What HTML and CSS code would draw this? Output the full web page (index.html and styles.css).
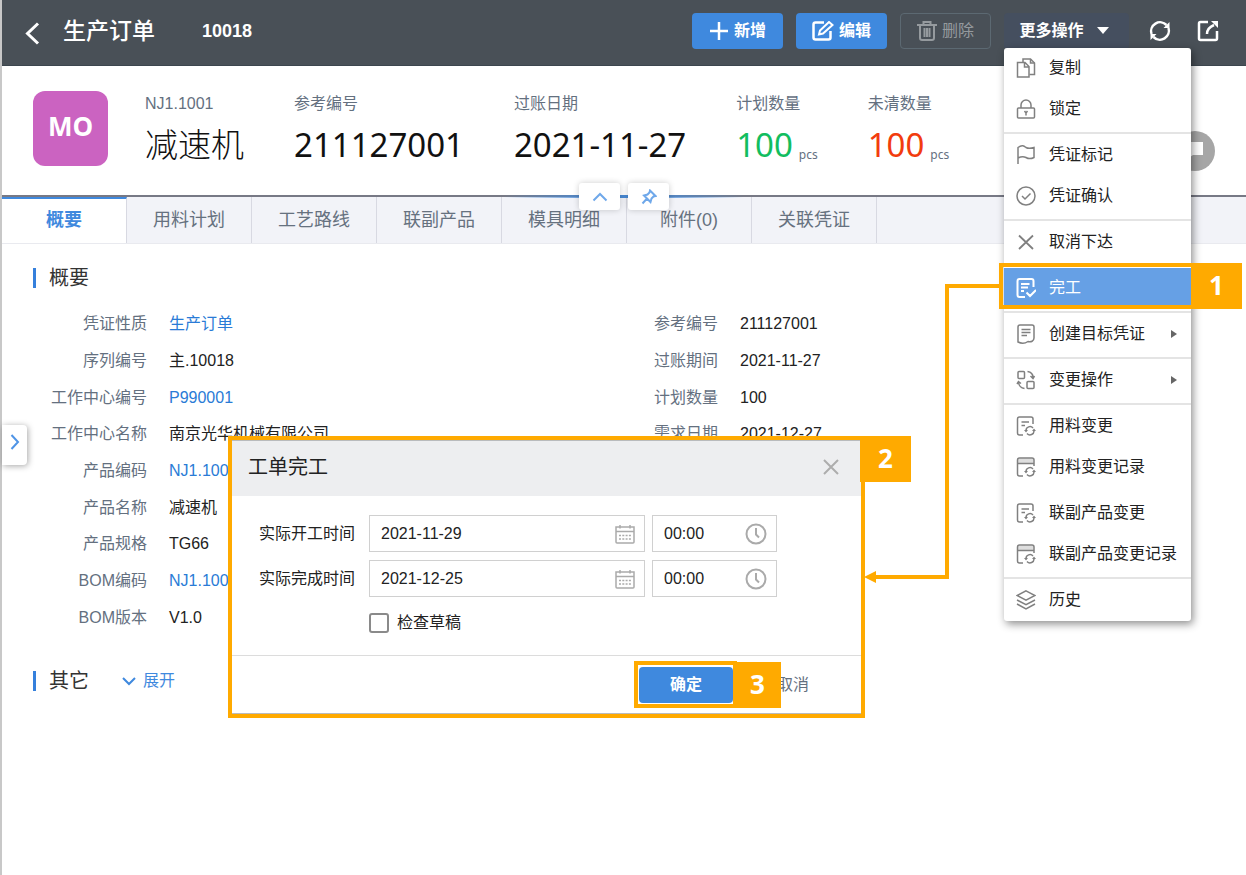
FILE: index.html
```
<!DOCTYPE html>
<html lang="zh-CN">
<head>
  <meta charset="UTF-8">
  <title>生产订单 10018</title>
  <meta name="viewport" content="width=device-width, initial-scale=1.0">
  <link rel="stylesheet" href="styles.css">
</head>
<body>
  <!-- icons -->
  <svg class="sprite" aria-hidden="true">
    <symbol id="i-doc-refresh" viewBox="0 0 20 20">
      <path d="M7 19H3.500Q1.500 19 1.500 17V3Q1.500 1 3.500 1H15Q17 1 17 3V8M5.500 6H13M5.500 9.500H9"/>
      <path d="M10 14.500A4 4 0 0 1 17 12M18 14.500A4 4 0 0 1 11 17.500"/>
      <path d="M8 14H12L10 16.500ZM16 15H20L18 12.500Z" fill="#808080" stroke="none"/>
    </symbol>
    <symbol id="i-log-refresh" viewBox="0 0 20 20">
      <path d="M2 1.500H17.500V6H2Z" fill="#dedede" stroke="none"/>
      <path d="M7 19H3.500Q1.500 19 1.500 17V3Q1.500 1 3.500 1H16Q18 1 18 3V9M1.500 6.500H18"/>
      <path d="M10 14.500A4 4 0 0 1 17 12M18 14.500A4 4 0 0 1 11 17.500"/>
      <path d="M8 14H12L10 16.500ZM16 15H20L18 12.500Z" fill="#808080" stroke="none"/>
    </symbol>
    <symbol id="i-calendar" viewBox="0 0 20 20">
      <path d="M1 3H19V18Q19 19 18 19H2Q1 19 1 18ZM1 7.500H19M5 1V4.500M15 1V4.500"/>
      <path d="M4 11.500H16M4 15H16" stroke-dasharray="2 1.300"/>
    </symbol>
    <symbol id="i-clock" viewBox="0 0 22 22">
      <circle cx="11" cy="11" r="9.500"/>
      <path d="M11 5V11.500L14 14.500"/>
    </symbol>
  </svg>

  <div class="page">
    <header class="topbar">
      <button class="icon-btn back" aria-label="返回">
        <svg width="15" height="23" viewBox="0 0 15 23"><path d="M13 1.500L2.500 11.500L13 21.500" stroke-width="3"/></svg>
      </button>
      <h1>生产订单</h1>
      <span class="order-no">10018</span>
      <div class="actions">
        <button class="btn primary">
          <svg width="20" height="20" viewBox="0 0 20 20"><path d="M10 1V19M1 10H19" stroke-width="2.500"/></svg>
          新增
        </button>
        <button class="btn primary">
          <svg width="22" height="20" viewBox="0 0 22 20"><path d="M12 1.500H3.500Q1.500 1.500 1.500 3.500V16.500Q1.500 18.500 3.500 18.500H16.500Q18.500 18.500 18.500 16.500V10" stroke-width="2.500"/><path d="M7 13.500L8 9.500L17 1L20.500 4L11 12.500Z" stroke-width="2"/></svg>
          编辑
        </button>
        <button class="btn disabled" disabled>
          <svg width="20" height="20" viewBox="0 0 20 20"><path d="M0 4H20M6.500 4V1H13.500V4M3 4V17Q3 19 5 19H15Q17 19 17 17V4M7.500 7V16M10 7V16M12.500 7V16" stroke-width="2"/></svg>
          删除
        </button>
        <div class="more">
          <button class="btn more-btn">更多操作
            <svg width="12" height="8" viewBox="0 0 12 8"><path d="M0 0H12L6 7Z" fill="#fff" stroke="none"/></svg>
          </button>
          <div class="menu">
            <ul>
              <li><button><svg viewBox="0 0 20 20"><path d="M7 4V1H14.500L18.500 5V16.500H13.500"/><path d="M1.500 4.500H9L13 8.500V19H1.500ZM8.500 5V9H13M14.500 1V5H18.500"/></svg>复制</button></li>
              <li><button><svg viewBox="0 0 20 20"><rect x="1.500" y="9" width="17" height="10" rx="1"/><path d="M5 9V6A5 5 0 0 1 15 6V9M8.500 12L10 14L11.500 12M10 14V16.500"/></svg>锁定</button></li>
            </ul>
            <ul>
              <li><button><svg viewBox="0 0 20 20"><path d="M2 19V2.500C6 -0.500 8 1 10 2.500C12.500 4 15 3.500 18 2.500V12.500C15 14 12.500 14 10 12.500C7 11 5 11.500 2 13"/></svg>凭证标记</button></li>
              <li><button><svg viewBox="0 0 20 20"><circle cx="10" cy="10" r="9"/><path d="M6 10L9 13L14.500 7.500"/></svg>凭证确认</button></li>
            </ul>
            <ul>
              <li><button><svg viewBox="0 0 20 20"><path d="M3 3.500L17 17M17 3.500L3 17" stroke-width="1.800"/></svg>取消下达</button></li>
            </ul>
            <ul>
              <li class="active">
                <button><svg viewBox="0 0 20 20"><path d="M9 19H3.500Q1.500 19 1.500 17V3Q1.500 1 3.500 1H15.500Q17.500 1 17.500 3V9M5 6H13.500M5 9.500H12M5 13H8M10.500 14.500L14 18L20 12" stroke-width="2"/></svg>完工</button>
                <span class="ring"></span>
                <span class="step step-1">1</span>
              </li>
            </ul>
            <ul>
              <li><button><svg viewBox="0 0 20 20"><path d="M4 1H16Q18 1 18 3V14C18 17 15 18.500 12 17.500C9 19.500 5 19.500 2 18V3Q2 1 4 1ZM5.500 5.500H14.500M5.500 8.500H14.500M5.500 11.500H11"/></svg>创建目标凭证<i class="caret"></i></button></li>
            </ul>
            <ul>
              <li><button><svg viewBox="0 0 20 20"><rect x="2" y="1.500" width="6.500" height="7" rx="1"/><rect x="11" y="11.500" width="7" height="7" rx="1"/><path d="M11.500 1.500C15 2 17 4 17 7.500M14.500 6L17 8.500L18.500 6M8.500 18.500C5 18 3 16 2.500 12.500M1 14L2.500 11.500L5 13.500"/></svg>变更操作<i class="caret"></i></button></li>
            </ul>
            <ul>
              <li><button><svg><use href="#i-doc-refresh"/></svg>用料变更</button></li>
              <li><button><svg><use href="#i-log-refresh"/></svg>用料变更记录</button></li>
            </ul>
            <ul class="no-line">
              <li><button><svg><use href="#i-doc-refresh"/></svg>联副产品变更</button></li>
              <li><button><svg><use href="#i-log-refresh"/></svg>联副产品变更记录</button></li>
            </ul>
            <ul>
              <li><button><svg viewBox="0 0 20 20"><path d="M10 0.800L19 5.500L10 10.200L1 5.500ZM1 10L10 14.700L19 10M1 14L10 19L19 14"/></svg>历史</button></li>
            </ul>
          </div>
        </div>
        <button class="icon-btn refresh" aria-label="刷新">
          <svg width="22" height="22" viewBox="0 0 22 22"><path d="M2.500 14A9 9 0 0 1 17.500 5M19.500 8A9 9 0 0 1 4.500 17" stroke-width="2.500"/><path d="M20.500 2V8H14.500ZM1.500 20V14H7.500Z" fill="#fff" stroke="none"/></svg>
        </button>
        <button class="icon-btn" aria-label="导出">
          <svg width="22" height="22" viewBox="0 0 22 22"><path d="M11 2H3.500Q2 2 2 3.500V18.500Q2 20 3.500 20H18.500Q20 20 20 18.500V11M10 14Q10 8 17 5" stroke-width="2.500"/><path d="M14 1H21V8Z" fill="#fff" stroke="none"/></svg>
        </button>
      </div>
    </header>

    <section class="summary">
      <div class="logo">MO</div>
      <div class="fact"><span>NJ1.1001</span><strong class="name">减速机</strong></div>
      <div class="fact"><span>参考编号</span><strong>211127001</strong></div>
      <div class="fact"><span>过账日期</span><strong>2021-11-27</strong></div>
      <div class="fact"><span>计划数量</span><strong class="green">100<small>pcs</small></strong></div>
      <div class="fact"><span>未清数量</span><strong class="red">100<small>pcs</small></strong></div>
      <button class="flag" aria-label="标记">
        <svg width="20" height="20" viewBox="0 0 20 20"><path d="M2 1H18V14H8L2 18Z" fill="#fff" stroke="none"/></svg>
      </button>
      <div class="fold">
        <button aria-label="收起"><svg width="16" height="10" viewBox="0 0 16 10"><path d="M1.500 8.500L8 2L14.500 8.500" stroke-width="2"/></svg></button>
        <button aria-label="固定"><svg width="16" height="16" viewBox="0 0 16 16"><path d="M9 1.500L14.500 7L12.500 7.500L10.500 9.500L9.500 13L3 6.500L6.500 5.500L8.500 3.500ZM6 9.500L1.500 14.500" stroke-width="2"/></svg></button>
      </div>
    </section>

    <nav class="tabs">
      <a href="#" class="on">概要</a>
      <a href="#">用料计划</a>
      <a href="#">工艺路线</a>
      <a href="#">联副产品</a>
      <a href="#">模具明细</a>
      <a href="#">附件(0)</a>
      <a href="#">关联凭证</a>
    </nav>

    <main>
      <h2>概要</h2>
      <div class="details">
        <dl>
          <dt>凭证性质</dt><dd><a href="#">生产订单</a></dd>
          <dt>序列编号</dt><dd>主.10018</dd>
          <dt>工作中心编号</dt><dd><a href="#">P990001</a></dd>
          <dt>工作中心名称</dt><dd>南京光华机械有限公司</dd>
          <dt>产品编码</dt><dd><a href="#">NJ1.1001</a></dd>
          <dt>产品名称</dt><dd>减速机</dd>
          <dt>产品规格</dt><dd>TG66</dd>
          <dt>BOM编码</dt><dd><a href="#">NJ1.1001</a></dd>
          <dt>BOM版本</dt><dd>V1.0</dd>
        </dl>
        <dl>
          <dt>参考编号</dt><dd>211127001</dd>
          <dt>过账期间</dt><dd>2021-11-27</dd>
          <dt>计划数量</dt><dd>100</dd>
          <dt>需求日期</dt><dd>2021-12-27</dd>
        </dl>
      </div>
      <div class="other">
        <h2>其它</h2>
        <a href="#"><svg width="14" height="10" viewBox="0 0 14 10"><path d="M1 2L7 8L13 2" stroke-width="2"/></svg>展开</a>
      </div>
    </main>

    <button class="drawer" aria-label="展开侧栏">
      <svg width="10" height="16" viewBox="0 0 10 16"><path d="M1.500 1L8 8L1.500 15" stroke-width="2"/></svg>
    </button>

    <form class="dialog" role="dialog" aria-labelledby="dialog-title">
      <div class="dialog-head">
        <h3 id="dialog-title">工单完工</h3>
        <button type="button" class="icon-btn" aria-label="关闭">
          <svg width="16" height="16" viewBox="0 0 16 16"><path d="M1 1L15 15M15 1L1 15" stroke="#adadad" stroke-width="2"/></svg>
        </button>
      </div>
      <div class="dialog-body">
        <label for="start-date">实际开工时间</label>
        <div class="field">
          <input type="text" id="start-date" value="2021-11-29">
          <svg><use href="#i-calendar"/></svg>
        </div>
        <div class="field time">
          <input type="text" aria-label="实际开工时间 时分" value="00:00">
          <svg><use href="#i-clock"/></svg>
        </div>
        <label for="end-date">实际完成时间</label>
        <div class="field">
          <input type="text" id="end-date" value="2021-12-25">
          <svg><use href="#i-calendar"/></svg>
        </div>
        <div class="field time">
          <input type="text" aria-label="实际完成时间 时分" value="00:00">
          <svg><use href="#i-clock"/></svg>
        </div>
        <div class="check">
          <input type="checkbox" id="draft">
          <label for="draft">检查草稿</label>
        </div>
      </div>
      <div class="dialog-foot">
        <div class="confirm">
          <button type="button" class="btn primary">确定</button>
          <span class="ring"></span>
          <span class="step step-3">3</span>
        </div>
        <button type="button" class="btn cancel">取消</button>
      </div>
      <span class="step step-2">2</span>
    </form>

    <!-- arrow from step 1 to step 2 -->
    <svg class="arrow" width="140" height="300" viewBox="0 0 140 300">
      <path d="M137 3H84V294H12" stroke="#ffaa00" stroke-width="4"/>
      <path d="M1 294L13 288V300Z" fill="#ffaa00" stroke="none"/>
    </svg>
  </div>
</body>
</html>
```
FILE: styles.css
```
* {
  box-sizing: border-box;
}
body {
  margin: 0;
  background: #fff;
  color: #222;
  font: 16px/24px "Liberation Sans", "Noto Sans CJK SC", sans-serif;
}
h1, h2, h3, ul, dl, dd {
  margin: 0;
  padding: 0;
  font-weight: normal;
}
ul {
  list-style: none;
}
a {
  color: #2a7bd6;
  text-decoration: none;
}
button, input {
  font: inherit;
  color: inherit;
}
button {
  border: none;
  background: none;
  padding: 0;
  cursor: pointer;
}
svg {
  fill: none;
  stroke: currentColor;
  flex: none;
}
.sprite {
  position: absolute;
  width: 0;
  height: 0;
}
.page {
  position: relative;
  min-height: 100vh;
  border-left: 2px solid #c8c8c8;
}

/* top bar */
.topbar {
  display: flex;
  align-items: center;
  height: 66px;
  padding: 0 27px 4px 23px;
  background: #495057;
  border-bottom: 1px solid #3c464e;
  color: #fff;
}
.icon-btn {
  display: flex;
}
.back {
  margin-top: 6px;
}
.topbar h1 {
  margin-left: 23px;
  font-size: 23px;
  font-weight: 500;
}
.order-no {
  margin-left: 47px;
  font-size: 18px;
  font-weight: bold;
}
.actions {
  display: flex;
  align-items: center;
  gap: 13px;
  margin-left: auto;
}
.btn {
  display: flex;
  align-items: center;
  justify-content: center;
  gap: 5px;
  width: 91px;
  height: 36px;
  border-radius: 4px;
}
.primary {
  background: #3f89de;
  color: #fff;
  font-weight: bold;
}
.disabled {
  border: 1px solid #5c6972;
  color: #959a9e;
}
.more {
  position: relative;
}
.more-btn {
  width: 125px;
  gap: 13px;
  padding-right: 5px;
  background: #454f5f;
  font-weight: bold;
}
.refresh {
  margin: 0 13px 0 7px;
}

/* drop-down menu */
.menu {
  position: absolute;
  z-index: 2;
  top: 35px;
  left: 0;
  width: 187px;
  background: #fff;
  border-radius: 3px;
  box-shadow: 2px 3px 8px rgba(0, 0, 0, 0.45);
  color: #222;
}
.menu ul + ul {
  margin-top: 2px;
  border-top: 2px solid #e4e4e4;
  padding-top: 1px;
}
.menu ul.no-line {
  border-color: transparent;
}
.menu li {
  position: relative;
}
.menu button {
  display: flex;
  align-items: center;
  gap: 13px;
  width: 100%;
  height: 41px;
  padding: 0 14px 0 12px;
}
.menu svg {
  width: 20px;
  height: 20px;
  stroke: #808080;
  stroke-width: 1.5;
}
.caret {
  margin-left: auto;
  border: 4px solid transparent;
  border-left: 6px solid #666;
  border-right: none;
}
.menu .active button {
  background: #66a0e5;
  color: #fff;
}
.menu .active svg {
  stroke: #fff;
}

/* numbered steps */
.ring {
  position: absolute;
  border: 4px solid #ffaa00;
  pointer-events: none;
}
.active .ring {
  inset: -5px -4px 0 -5px;
}
.confirm .ring {
  inset: -6px -4px -5px -5px;
}
.step {
  position: absolute;
  width: 51px;
  height: 46px;
  background: #ffaa00;
  color: #fff;
  font: bold 26px/45px "Open Sans", "Noto Sans", sans-serif;
  text-align: center;
}
.step-1 {
  top: -5px;
  left: 187px;
}
.step-2 {
  top: -4px;
  left: 628px;
}
.step-3 {
  top: -5px;
  left: 95px;
  width: 47px;
}
.arrow {
  position: absolute;
  top: 283px;
  left: 861px;
}

/* summary */
.summary {
  position: relative;
  display: flex;
  align-items: flex-start;
  gap: 50px;
  height: 131px;
  padding: 25px 31px 0;
  border-bottom: 2px solid #777985;
}
.logo {
  width: 75px;
  height: 75px;
  margin-right: -13px;
  border-radius: 12px;
  background: #cb63c1;
  color: #fff;
  font: bold 26px/71px "Open Sans", sans-serif;
  text-align: center;
}
.fact {
  white-space: nowrap;
}
.fact span {
  display: block;
  color: #64707f;
  line-height: 26px;
}
.fact strong {
  display: flex;
  align-items: baseline;
  gap: 6px;
  color: #111;
  font: 400 33px/56px "Noto Sans", "Noto Sans CJK SC", sans-serif;
}
.fact .name {
  font-weight: 300;
}
.fact small {
  position: relative;
  top: 2px;
  color: #64707f;
  font-size: 12px;
  line-height: 16px;
}
.fact .green {
  color: #12bd5f;
}
.fact .red {
  color: #f23c0e;
}
.flag {
  display: flex;
  align-items: center;
  justify-content: center;
  width: 40px;
  height: 40px;
  margin: 40px 0 0 auto;
  border-radius: 50%;
  background: #a6a6a6;
}
.fold {
  position: absolute;
  bottom: -15px;
  left: 50%;
  display: flex;
  justify-content: center;
  gap: 8px;
  width: 240px;
  margin-left: -120px;
  background: linear-gradient(90deg, transparent, #4a8ad4 40%, #4a8ad4 60%, transparent) 0 12px / 100% 3px no-repeat;
}
.fold button {
  display: flex;
  align-items: center;
  justify-content: center;
  width: 41px;
  height: 27px;
  border-radius: 3px;
  background: #fff;
  box-shadow: 0 0 6px rgba(0, 0, 0, 0.2);
  color: #6fa8ea;
}

/* tabs */
.tabs {
  display: flex;
  height: 47px;
  background: #f2f3f8;
  border-bottom: 1px solid #e9eaef;
}
.tabs a {
  width: 125px;
  border-right: 1px solid #d8d9e2;
  color: #66717f;
  font-size: 18px;
  line-height: 46px;
  text-align: center;
}
.tabs .on {
  border-top: 2px solid #3f89de;
  background: #fff;
  color: #3f89de;
  font-weight: bold;
  line-height: 43px;
}

/* order details */
main {
  padding: 20px 31px;
}
h2 {
  border-left: 3px solid #3580dc;
  padding-left: 13px;
  color: #333;
  font-size: 20px;
  line-height: 20px;
  margin: 4px 0 18px;
}
.details {
  display: grid;
  grid-template-columns: 571px 1fr;
  align-items: start;
}
dl {
  display: grid;
  grid-template-columns: 114px 1fr;
  column-gap: 22px;
  align-items: center;
}
.details dl {
  grid-template-rows: repeat(9, 1fr);
  height: 330px;
}
dt {
  color: #64707f;
  text-align: right;
}
.other {
  display: flex;
  align-items: center;
  gap: 33px;
  margin-top: 33px;
}
.other h2 {
  margin: 0;
}
.other a {
  display: flex;
  align-items: center;
  gap: 7px;
  color: #3f89de;
}
.drawer {
  position: absolute;
  top: 425px;
  left: 0;
  width: 25px;
  height: 40px;
  border-radius: 0 4px 4px 0;
  background: #fff;
  box-shadow: 1px 1px 6px rgba(0, 0, 0, 0.35);
  color: #4f94e6;
}

/* dialog */
.dialog {
  position: absolute;
  top: 436px;
  left: 226px;
  width: 637px;
  border: 4px solid #ffaa00;
  background: #fff;
}
.dialog-head {
  display: flex;
  align-items: center;
  justify-content: space-between;
  height: 56px;
  padding: 0 22px 3px 16px;
  background: #edeef0;
  border-top: 1px solid #b9bbbd;
}
.dialog-head h3 {
  font-size: 20px;
}
.dialog-body {
  display: grid;
  grid-template-columns: 110px 276px 125px;
  row-gap: 8px;
  align-items: center;
  padding: 19px 27px 22px;
}
.field {
  display: flex;
  align-items: center;
  height: 37px;
  padding: 0 9px 0 11px;
  border: 1px solid #d0d0d0;
}
.time {
  width: 125px;
  margin-left: 7px;
}
.field input {
  flex: 1;
  min-width: 0;
  padding: 0;
  border: none;
  outline: none;
  background: none;
}
.field svg {
  width: 20px;
  height: 20px;
  color: #aaa;
  stroke-width: 1.5;
}
.time svg {
  width: 22px;
  height: 22px;
  stroke-width: 2;
}
.check {
  grid-column: 2 / 4;
  display: flex;
  align-items: center;
  gap: 8px;
  height: 20px;
  margin-top: 8px;
}
.check input {
  appearance: none;
  width: 20px;
  height: 20px;
  margin: 0;
  border: 2px solid #8a8a8a;
  border-radius: 3px;
}
.dialog-foot {
  display: flex;
  align-items: center;
  justify-content: flex-end;
  gap: 13px;
  height: 59px;
  padding-right: 21px;
  border-top: 1px solid #dcdcdc;
  border-bottom: 1px solid #b9bbbd;
}
.dialog-foot .btn {
  width: 94px;
}
.confirm {
  position: relative;
}
.cancel {
  color: #64707f;
}
```
